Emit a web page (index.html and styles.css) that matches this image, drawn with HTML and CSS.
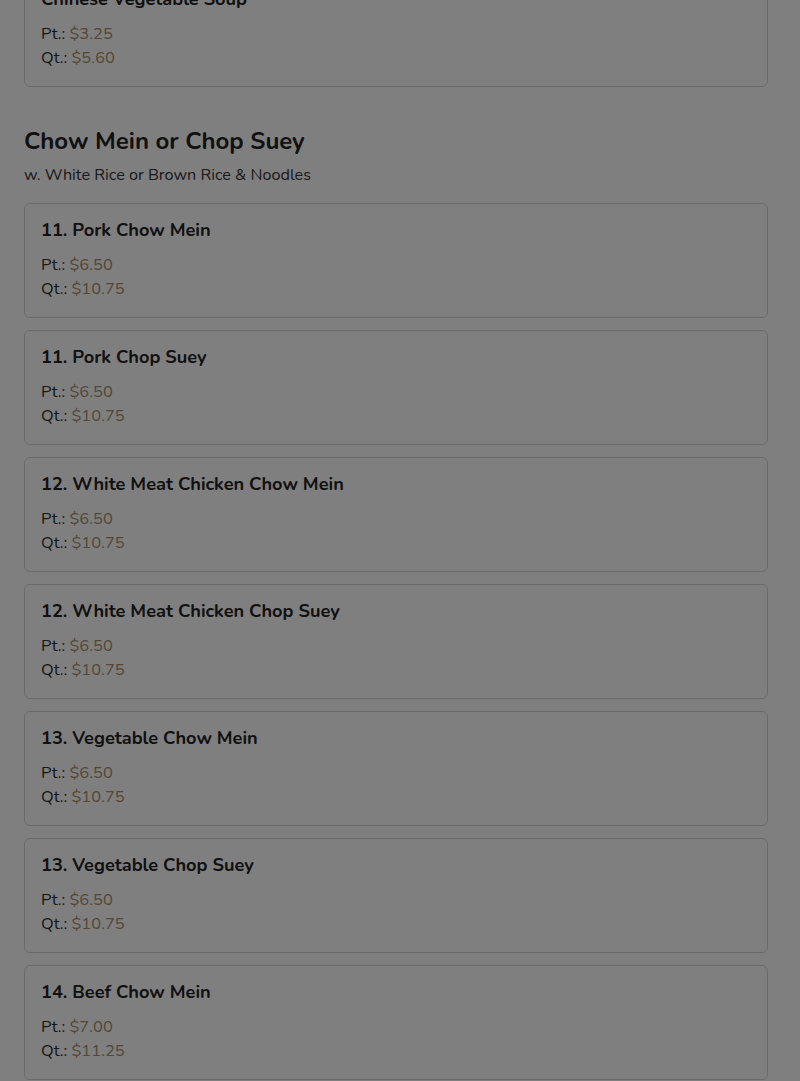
FILE: index.html
```html
<!DOCTYPE html>
<html>
<head>
<meta charset="utf-8">
<link rel="stylesheet" href="styles.css">
</head>
<body>
<main class="menu">
  <div class="card card-top">
    <h3 class="item-title">Chinese Vegetable Soup</h3>
    <div class="price-row">Pt.: <span class="price">$3.25</span></div>
    <div class="price-row">Qt.: <span class="price">$5.60</span></div>
  </div>

  <section class="section">
    <h2 class="section-title">Chow Mein or Chop Suey</h2>
    <p class="section-desc">w. White Rice or Brown Rice &amp; Noodles</p>
    <div class="list">
      <div class="card">
        <h3 class="item-title">11. Pork Chow Mein</h3>
        <div class="price-row">Pt.: <span class="price">$6.50</span></div>
        <div class="price-row">Qt.: <span class="price">$10.75</span></div>
      </div>
      <div class="card">
        <h3 class="item-title">11. Pork Chop Suey</h3>
        <div class="price-row">Pt.: <span class="price">$6.50</span></div>
        <div class="price-row">Qt.: <span class="price">$10.75</span></div>
      </div>
      <div class="card">
        <h3 class="item-title">12. White Meat Chicken Chow Mein</h3>
        <div class="price-row">Pt.: <span class="price">$6.50</span></div>
        <div class="price-row">Qt.: <span class="price">$10.75</span></div>
      </div>
      <div class="card">
        <h3 class="item-title">12. White Meat Chicken Chop Suey</h3>
        <div class="price-row">Pt.: <span class="price">$6.50</span></div>
        <div class="price-row">Qt.: <span class="price">$10.75</span></div>
      </div>
      <div class="card">
        <h3 class="item-title">13. Vegetable Chow Mein</h3>
        <div class="price-row">Pt.: <span class="price">$6.50</span></div>
        <div class="price-row">Qt.: <span class="price">$10.75</span></div>
      </div>
      <div class="card">
        <h3 class="item-title">13. Vegetable Chop Suey</h3>
        <div class="price-row">Pt.: <span class="price">$6.50</span></div>
        <div class="price-row">Qt.: <span class="price">$10.75</span></div>
      </div>
      <div class="card">
        <h3 class="item-title">14. Beef Chow Mein</h3>
        <div class="price-row">Pt.: <span class="price">$7.00</span></div>
        <div class="price-row">Qt.: <span class="price">$11.25</span></div>
      </div>
    </div>
  </section>
</main>
<div class="overlay"></div>
</body>
</html>
```

FILE: styles.css
```css
html, body {
  margin: 0;
  padding: 0;
  background: #ffffff;
}
body {
  font-family: "Nunito", "Open Sans", "Noto Sans", sans-serif;
  color: #2a2a2a;
  overflow: hidden;
  height: 1081px;
}
.menu {
  padding: 0 32px 0 24px;
  margin-top: -28px;
}
.card {
  border: 1px solid #d6d6d6;
  border-radius: 6px;
  padding: 14px 16px 16px;
  background: #ffffff;
}
.item-title {
  margin: 0 0 11px;
  font-size: 18.2px;
  font-weight: 700;
  line-height: 24px;
  color: #222222;
}
.price-row {
  font-size: 16.5px;
  line-height: 24px;
  color: #2e2e2e;
}
.price {
  color: #a88f6c;
}
.section {
  margin-top: 38px;
}
.section-title {
  margin: 0;
  font-size: 24px;
  font-weight: 700;
  line-height: 32px;
  color: #222222;
}
.section-desc {
  margin: 6px 0 16px;
  font-size: 16.2px;
  line-height: 24px;
  color: #333333;
}
.list {
  display: flex;
  flex-direction: column;
  gap: 12px;
}
.overlay {
  position: fixed;
  inset: 0;
  background: rgba(0, 0, 0, 0.5);
}
```
